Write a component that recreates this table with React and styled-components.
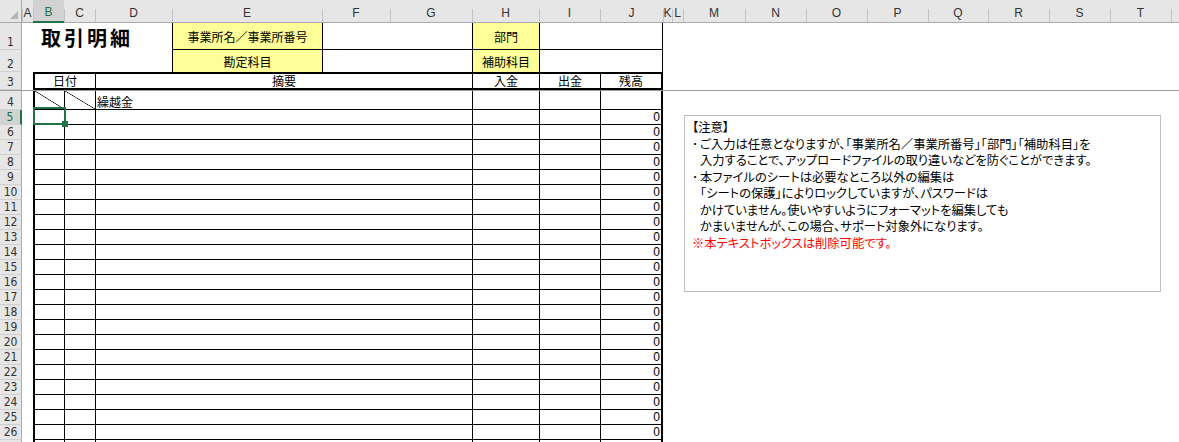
import React from 'react';
import styled, { createGlobalStyle } from 'styled-components';

const GREEN = '#217346';
const HEAD_BG = '#e6e6e6';
const HEAD_LINE = '#ababab';
const YELLOW = '#ffff99';

const GlobalStyle = createGlobalStyle`
  html, body {
    margin: 0;
    padding: 0;
    background: #fff;
    overflow: hidden;
  }
  body {
    font-family: 'Noto Sans CJK JP', 'Liberation Sans', sans-serif;
    font-size: 12px;
    color: #000;
  }
`;

const Sheet = styled.div`
  position: relative;
  width: 1179px;
  height: 442px;
  overflow: hidden;
`;

// column header bar
const ColHeadBar = styled.div`
  display: flex;
  height: 23px;
  background: ${HEAD_BG};
`;

const Corner = styled.div`
  flex: 0 0 22px;
  box-sizing: border-box;
  display: flex;
  align-items: flex-end;
  justify-content: flex-end;
  padding: 0 3px 3px 0;
  border-right: 1px solid ${HEAD_LINE};
  border-bottom: 1px solid ${HEAD_LINE};
`;

const ColHead = styled.div`
  flex: 0 0 ${p => p.$w}px;
  box-sizing: border-box;
  display: flex;
  align-items: flex-end;
  justify-content: center;
  padding-bottom: 2px;
  font-family: 'Liberation Sans', Arial, sans-serif;
  font-size: 12px;
  line-height: 14px;
  color: ${p => (p.$active ? GREEN : '#333')};
  background: linear-gradient(#c4c4c4, #c4c4c4) left bottom / 1px 13px no-repeat,
    ${p => (p.$active ? '#d2d2d2' : HEAD_BG)};
  border-bottom: ${p => (p.$active ? `2px solid ${GREEN}` : `1px solid ${HEAD_LINE}`)};
`;

// sheet rows
const Row = styled.div`
  display: flex;
  box-sizing: border-box;
  height: ${p => p.$h}px;
  border-bottom: ${p => (p.$freeze ? '1px solid #9a9a9a' : 'none')};
`;

const RowHead = styled.div`
  flex: 0 0 22px;
  box-sizing: border-box;
  display: flex;
  align-items: flex-end;
  justify-content: center;
  font-family: 'Liberation Sans Narrow', 'DejaVu Sans Condensed', 'Liberation Sans', sans-serif;
  font-size: 12px;
  line-height: 14px;
  color: ${p => (p.$active ? GREEN : '#333')};
  background: ${p => (p.$active ? '#d2d2d2' : HEAD_BG)};
  border-right: ${p => (p.$active ? `2px solid ${GREEN}` : `1px solid ${HEAD_LINE}`)};
  border-bottom: 1px solid #d0d0d0;
`;

const ColA = styled.div`
  flex: 0 0 11px;
`;

const Rest = styled.div`
  flex: 1;
`;

const line = w => (w ? `${w}px solid #000` : 'none');

const Cell = styled.div`
  flex: 0 0 ${p => p.$w}px;
  box-sizing: border-box;
  display: flex;
  align-items: ${p => (p.$middle ? 'center' : 'flex-end')};
  justify-content: ${p => ({ left: 'flex-start', center: 'center', right: 'flex-end' })[p.$align || 'left']};
  padding: ${p => (p.$middle ? '2px 1px 0' : '0 1px')};
  background: ${p => p.$bg || 'transparent'};
  border-left: ${p => line(p.$l)};
  border-right: ${p => line(p.$r)};
  border-top: ${p => line(p.$t)};
  border-bottom: ${p => line(p.$b)};
  font-size: 12px;
  line-height: 14px;
  white-space: nowrap;
  overflow: ${p => (p.$spill ? 'visible' : 'hidden')};
`;

const DiagCell = styled(Cell)`
  background: linear-gradient(
    to top right,
    transparent calc(50% - 0.6px),
    #000 50%,
    transparent calc(50% + 0.6px)
  );
`;

const Title = styled.span`
  padding-left: 7px;
  font-size: 20px;
  font-weight: 700;
  line-height: 25px;
  letter-spacing: 3px;
`;

const Num = styled.span`
  font-family: 'Liberation Sans Narrow', 'Liberation Sans', sans-serif;
  font-size: 12px;
  line-height: 14px;
`;

// overlays: active cell and the floating text box
const Selection = styled.div`
  position: absolute;
  left: 33px;
  top: 107px;
  width: 33px;
  height: 18px;
  box-sizing: border-box;
  border: 2px solid ${GREEN};
`;

const FillHandle = styled.div`
  position: absolute;
  left: 62px;
  top: 121px;
  width: 6px;
  height: 6px;
  background: ${GREEN};
`;

const NoteBox = styled.div`
  position: absolute;
  left: 684px;
  top: 115px;
  width: 477px;
  height: 177px;
  box-sizing: border-box;
  padding: 3px 7px;
  border: 1px solid #bfbfbf;
  background: #fff;
  font-size: 12.3px;
  line-height: 16.5px;
  font-feature-settings: 'palt';
  white-space: nowrap;
`;

const NoteLine = styled.div`
  color: ${p => (p.$warn ? '#ff0000' : '#000')};
`;

const NoteItem = styled.div`
  display: flex;
`;

const Bullet = styled.span`
  flex: 0 0 8px;
`;

const columns = [
  ['A', 11], ['B', 31], ['C', 31], ['D', 77], ['E', 150], ['F', 68], ['G', 82],
  ['H', 67], ['I', 61], ['J', 63], ['K', 9], ['L', 11], ['M', 62], ['N', 61],
  ['O', 61], ['P', 61], ['Q', 60], ['R', 61], ['S', 61], ['T', 61], ['U', 61],
];

const SheetRow = ({ n, h, freeze, active, children }) => (
  <Row $h={h} $freeze={freeze}>
    <RowHead $active={active}>{n}</RowHead>
    <ColA />
    {children}
    <Rest />
  </Row>
);

const bodyRows = Array.from({ length: 23 }, (_, i) => i + 5);

export default function App() {
  return (
    <Sheet>
      <GlobalStyle />
      <ColHeadBar>
        <Corner>
          <svg width='8' height='8' viewBox='0 0 8 8'>
            <polygon points='8,0 8,8 0,8' fill='#b4b4b4' />
          </svg>
        </Corner>
        {columns.map(([id, w]) => (
          <ColHead key={id} $w={w} $active={id === 'B'}>
            {id}
          </ColHead>
        ))}
      </ColHeadBar>

      <SheetRow n={1} h={27}>
        <Cell $w={139} $spill>
          <Title>取引明細</Title>
        </Cell>
        <Cell $w={150} $bg={YELLOW} $l={1} $b={1} $align='center' $middle>
          事業所名／事業所番号
        </Cell>
        <Cell $w={150} $l={1} $b={1} />
        <Cell $w={67} $bg={YELLOW} $l={1} $b={1} $align='center' $middle>
          部門
        </Cell>
        <Cell $w={124} $l={1} $r={1} $b={1} />
      </SheetRow>

      <SheetRow n={2} h={22}>
        <Cell $w={139} />
        <Cell $w={150} $bg={YELLOW} $l={1} $align='center' $middle>
          勘定科目
        </Cell>
        <Cell $w={150} $l={1} />
        <Cell $w={67} $bg={YELLOW} $l={1} $align='center' $middle>
          補助科目
        </Cell>
        <Cell $w={124} $l={1} $r={1} />
      </SheetRow>

      <SheetRow n={3} h={19} freeze>
        <Cell $w={62} $l={2} $t={2} $b={2} $align='center'>日付</Cell>
        <Cell $w={377} $l={1} $t={2} $b={2} $align='center'>摘要</Cell>
        <Cell $w={67} $l={1} $t={2} $b={2} $align='center'>入金</Cell>
        <Cell $w={61} $l={1} $t={2} $b={2} $align='center'>出金</Cell>
        <Cell $w={63} $l={1} $r={2} $t={2} $b={2} $align='center'>残高</Cell>
      </SheetRow>

      <SheetRow n={4} h={19}>
        <DiagCell $w={31} $l={2} $b={1} />
        <DiagCell $w={31} $l={1} $b={1} />
        <Cell $w={377} $l={1} $b={1}>繰越金</Cell>
        <Cell $w={67} $l={1} $b={1} />
        <Cell $w={61} $l={1} $b={1} />
        <Cell $w={63} $l={1} $r={2} $b={1} />
      </SheetRow>

      {bodyRows.map(n => (
        <SheetRow key={n} n={n} h={15} active={n === 5}>
          <Cell $w={31} $l={2} $b={1} />
          <Cell $w={31} $l={1} $b={1} />
          <Cell $w={377} $l={1} $b={1} />
          <Cell $w={67} $l={1} $b={1} />
          <Cell $w={61} $l={1} $b={1} />
          <Cell $w={63} $l={1} $r={2} $b={1} $align='right'>
            <Num>0</Num>
          </Cell>
        </SheetRow>
      ))}

      <Selection />
      <FillHandle />

      <NoteBox>
        <NoteLine>【注意】</NoteLine>
        <NoteItem>
          <Bullet>･</Bullet>
          <div>
            <NoteLine>ご入力は任意となりますが、「事業所名／事業所番号」「部門」「補助科目」を</NoteLine>
            <NoteLine>入力することで、アップロードファイルの取り違いなどを防ぐことができます。</NoteLine>
          </div>
        </NoteItem>
        <NoteItem>
          <Bullet>･</Bullet>
          <div>
            <NoteLine>本ファイルのシートは必要なところ以外の編集は</NoteLine>
            <NoteLine>「シートの保護」によりロックしていますが、パスワードは</NoteLine>
            <NoteLine>かけていません。使いやすいようにフォーマットを編集しても</NoteLine>
            <NoteLine>かまいませんが、この場合、サポート対象外になります。</NoteLine>
          </div>
        </NoteItem>
        <NoteLine $warn>※本テキストボックスは削除可能です。</NoteLine>
      </NoteBox>
    </Sheet>
  );
}
